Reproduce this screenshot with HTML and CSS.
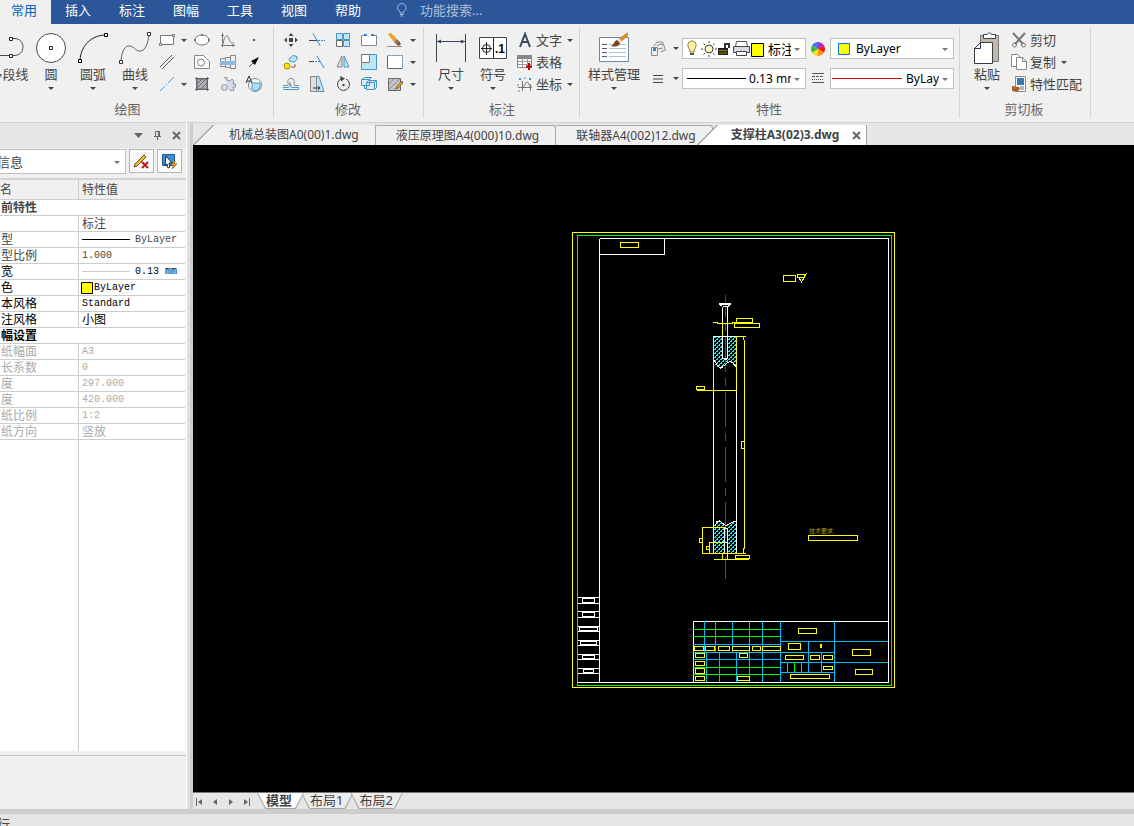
FILE: index.html
```html
<!DOCTYPE html>
<html lang="zh-CN">

<head>
  <meta charset="UTF-8">
  <meta name="viewport" content="width=device-width, initial-scale=1.0">
  <title>CAD</title>
  <link rel="stylesheet" href="styles.css">
</head>

<body>
  <header class="menubar">
    <nav class="menu">
      <a href="#" class="active">常用</a>
      <a href="#">插入</a>
      <a href="#">标注</a>
      <a href="#">图幅</a>
      <a href="#">工具</a>
      <a href="#">视图</a>
      <a href="#">帮助</a>
    </nav>
    <label class="search">
      <svg width="12" height="14" viewBox="0 0 12 14" fill="none" stroke="#a9bcdb"><path d="M4 10V8.500C2.500 7.500 1.500 6.500 1.500 4.800a4.300 4.300 0 0 1 8.600 0C10.100 6.500 9 7.500 7.500 8.500V10zM4 11.500h3.500M4.500 13h2.500"/></svg>
      <input type="text" placeholder="功能搜索..." aria-label="功能搜索...">
    </label>
  </header>

  <div class="ribbon">
    <!-- draw -->
    <section class="group draw">
      <div class="group-body">
        <button class="big">
          <svg width="34" height="34" viewBox="0 0 34 34" fill="none" stroke="#444b57"><path d="M0 24.500h19M19 7.500h3c12 0 12 17 0 17h-3"/><g fill="#fff" stroke="#222"><path d="M17.500 6.500h3v3h-3zM17.500 23.500h3v3h-3z"/></g></svg>
          <span>多段线</span>
        </button>
        <button class="big">
          <svg width="34" height="34" viewBox="0 0 34 34"><circle cx="17" cy="17" r="14.500" fill="#fff" stroke="#444b57"/><path d="M15.500 15.500h3v3h-3z" fill="#fff" stroke="#222"/></svg>
          <span>圆</span><i class="arrow"></i>
        </button>
        <button class="big">
          <svg width="34" height="34" viewBox="0 0 34 34" fill="none" stroke="#222"><path d="M4 29C5 14 16 4 30 4"/><path d="M2.500 28.500h3v3h-3zM28.500 2.500h3v3h-3z" fill="#fff" stroke="#000"/></svg>
          <span>圆弧</span><i class="arrow"></i>
        </button>
        <button class="big">
          <svg width="34" height="34" viewBox="0 0 34 34" fill="none" stroke="#555c66"><path d="M3 29C4 20 7 14 12 15c5 1 6 6 11 5 5-1 7-9 8-16"/><path d="M1.500 29.500h3v3h-3zM29.500 1.500h3v3h-3z" fill="#fff" stroke="#333"/></svg>
          <span>曲线</span><i class="arrow"></i>
        </button>
        <div class="icons draw-icons">
          <button aria-label="矩形"><svg width="18" height="16" viewBox="0 0 18 16" fill="#fff" stroke="#777"><path d="M2.500 3.500h13v9h-13z"/><path d="M1.500 11.500h2v2h-2zM14.500 2.500h2v2h-2z"/></svg></button>
          <i class="arrow"></i>
          <button aria-label="椭圆"><svg width="18" height="16" viewBox="0 0 18 16" fill="#fff" stroke="#777"><ellipse cx="9" cy="8" rx="7" ry="5"/><path d="M1 7h2v2H1zM15 7h2v2h-2zM8 2h2v2H8z" fill="#777" stroke="none"/></svg></button>
          <button aria-label="函数"><svg width="16" height="16" viewBox="0 0 16 16" fill="none" stroke="#777"><path d="M2.500 1v14M1 13.500h14M3 12C5 1 8 3 9 7s3 4 5 4M1 3.500h3M13 12v3"/></svg></button>
          <button aria-label="点"><svg width="16" height="16" viewBox="0 0 16 16"><path d="M7 7h2v2H7z" fill="#555"/></svg></button>

          <button aria-label="平行线"><svg width="16" height="16" viewBox="0 0 16 16" fill="none" stroke="#555"><path d="M1 13L13 1M3 15L15 3"/></svg></button>
          <i></i>
          <button aria-label="孔"><svg width="16" height="16" viewBox="0 0 16 16" fill="#fafafa" stroke="#888"><path d="M.5 1.500h9l6 6v7H.5z"/><circle cx="7" cy="8.500" r="3.500"/></svg></button>
          <button aria-label="轴"><svg width="18" height="16" viewBox="0 0 18 16" fill="#e8f0f8" stroke="#888"><path d="M1.500 4.500h5v8h-5zM6.500 3.500h5v10h-5zM11.500 1.500h5v13h-5z"/><path d="M1 7h16v4H1z" fill="#8db8e0" stroke="none"/></svg></button>
          <button aria-label="箭头"><svg width="16" height="16" viewBox="0 0 16 16"><path d="M3 13l6-6" stroke="#555"/><path d="M13 3L5 7l4 4z" fill="#000"/></svg></button>

          <button aria-label="中心线"><svg width="16" height="16" viewBox="0 0 16 16" stroke="#35a9e0"><path d="M1 15l5-5M7 9l1-1M9 7l6-6"/></svg></button>
          <i class="arrow"></i>
          <button aria-label="剖面线"><svg width="16" height="16" viewBox="0 0 16 16" fill="#aeb2b8" stroke="#666"><path d="M3 3h10v10H3z"/><path d="M1 2.500h14M1 13.500h14M2.500 1v14M13.500 1v14M3 8l5-5M3 12l9-9M7 13l6-6"/></svg></button>
          <button aria-label="齿形"><svg width="16" height="16" viewBox="0 0 16 16" fill="#d6dde8" stroke="#8a93a3"><path d="M4 1.500h3V4l3 1 2-2 2 2-1 3h2.500v3H13l1 3-3 1-2-2"/><circle cx="4.500" cy="11.500" r="3"/></svg></button>
          <button aria-label="局部放大"><svg width="18" height="18" viewBox="0 0 18 18"><circle cx="10" cy="10" r="6.500" fill="#f7f7f7" stroke="#888"/><path d="M7 8h8v5l-4 3-4-2z" fill="#aedcf5" stroke="#4a9bc9"/><path d="M1 8l3-7 3 7M2 6h4" fill="none" stroke="#333"/></svg></button>
        </div>
      </div>
      <h2>绘图</h2>
    </section>

    <!-- modify -->
    <section class="group modify">
      <div class="group-body">
        <div class="icons modify-icons">
          <button aria-label="平移"><svg width="16" height="16" viewBox="0 0 16 16" fill="#444"><path d="M6 6h4v4H6zM8 1l2.500 3h-5zM8 15l2.500-3h-5zM1 8l3-2.500v5zM15 8l-3-2.500v5z"/></svg></button>
          <button aria-label="裁剪"><svg width="16" height="16" viewBox="0 0 16 16" fill="none"><path d="M0 8.500h8" stroke="#444"/><path d="M9 8.500h7" stroke="#2f86d6" stroke-dasharray="2 1"/><path d="M4 1.500l7 12" stroke="#2f86d6"/></svg></button>
          <button aria-label="阵列"><svg width="16" height="16" viewBox="0 0 16 16" fill="#bfe4f8" stroke="#4795c4"><path d="M1.500 1.500h6v6h-6zM8.500 1.500h6v6h-6zM8.500 8.500h6v6h-6z"/><path d="M1.500 8.500h6v6h-6z" fill="#fff" stroke="#666"/></svg></button>
          <button aria-label="打断"><svg width="16" height="16" viewBox="0 0 16 16"><path d="M.5 3.500h15v10H.5z" fill="#fff" stroke="#888"/><path d="M4 2h8v3H4z" fill="#f0f0f0"/><path d="M3 2h3v2H3zM10 2h3v2h-3z" fill="#2f86d6"/></svg></button>
          <button aria-label="删除"><svg width="16" height="16" viewBox="0 0 16 16"><path d="M1 2l3-1 6 6-3 3z" fill="#f0a020"/><path d="M7 10l3-3 2 2-3 3z" fill="#777"/><path d="M9 12l3-3 2 3-2 2z" fill="#9c4a20"/><path d="M0 14.500h15" stroke="#888"/></svg></button>
          <i class="arrow"></i>

          <button aria-label="平移复制"><svg width="16" height="16" viewBox="0 0 16 16"><circle cx="4" cy="12" r="3" fill="#ffe600" stroke="#a08a10"/><path d="M6 5l4-3.500 4 1v3L11 8 7 7.500z" fill="#bfe4f8" stroke="#4795c4"/><path d="M8 13h4v-3" fill="none" stroke="#b04040"/></svg></button>
          <button aria-label="延伸"><svg width="16" height="16" viewBox="0 0 16 16" fill="none"><path d="M0 7.500h5" stroke="#444"/><path d="M6 7.500h6" stroke="#2f86d6" stroke-dasharray="2 1"/><path d="M8 2l7 12" stroke="#2f86d6"/></svg></button>
          <button aria-label="镜像"><svg width="16" height="16" viewBox="0 0 16 16"><path d="M7 2v11H2z" fill="#ddd" stroke="#888"/><path d="M9 2v11h5z" fill="#bfe4f8" stroke="#4795c4"/></svg></button>
          <button aria-label="缩放"><svg width="18" height="16" viewBox="0 0 18 16"><path d="M1.500.5h15v15h-15z" fill="#bfe4f8" stroke="#4795c4"/><path d="M1.500.5h8v8h-8z" fill="#fff" stroke="#777"/></svg></button>
          <button aria-label="拉伸"><svg width="16" height="16" viewBox="0 0 16 16"><path d="M.5 1.500h15v13H.5z" fill="#fff" stroke="#666"/><path d="M.5 1.500h15v13" fill="none" stroke="#8cc8ee" stroke-dasharray="2 1"/></svg></button>
          <i class="arrow"></i>

          <button aria-label="等距线"><svg width="16" height="16" viewBox="0 0 16 16" fill="none"><path d="M0 9.500h4c3 0-2-7 4-7s1 7 4 7h4" stroke="#888"/><path d="M0 13.500h15.500v-2H9c-2 0-1-5-2-5s1 5-2 5H0" stroke="#4795c4"/></svg></button>
          <button aria-label="拔模"><svg width="16" height="16" viewBox="0 0 16 16"><path d="M7 .5h3l5 15H7z" fill="#bfe4f8" stroke="#4795c4"/><path d="M1.500.5h6v15h-6z" fill="#ddd" stroke="#888"/><path d="M4 12h7M9 10l2 2-2 2" fill="none" stroke="#333"/></svg></button>
          <button aria-label="旋转"><svg width="16" height="16" viewBox="0 0 16 16"><path d="M6 3a6 6 0 1 0 5 0" fill="none" stroke="#444"/><path d="M5 0l5 2.500-4 3z" fill="#444"/><circle cx="8.500" cy="9" r="1.200" fill="#444"/></svg></button>
          <button aria-label="块"><svg width="16" height="16" viewBox="0 0 16 16" fill="#d6edfa" stroke="#4795c4"><path d="M.5 3.500l3-2h7l-2 2v6h-8zM5.500 6.500h8v7h-8zM5.500 6.500l2-2h8l-2 2M15.500 4.500v7l-2 2M.5 3.500h8M3.500 9.500v3h2"/></svg></button>
          <button aria-label="填充编辑"><svg width="16" height="16" viewBox="0 0 16 16"><path d="M1.500 2.500h12v12h-12z" fill="#c4c6ca" stroke="#666"/><path d="M2 8l6-6M2 13L13 3M7 14l6-6" stroke="#888"/><path d="M15 5l1 2-5 5-2 1 1-3z" fill="#f0a020" stroke="#86602a"/></svg></button>
          <i class="arrow"></i>
        </div>
      </div>
      <h2>修改</h2>
    </section>

    <!-- annotate -->
    <section class="group annotate">
      <div class="group-body">
        <button class="big">
          <svg width="34" height="34" viewBox="0 0 34 34" fill="none" stroke="#3a4656"><path d="M2.500 3v28M31.500 3v28M3 10.500h28"/><path d="M3 10.500l4-2v4zM31 10.500l-4-2v4z" fill="#3a4656" stroke="none"/></svg>
          <span>尺寸</span><i class="arrow"></i>
        </button>
        <button class="big">
          <svg width="34" height="34" viewBox="0 0 34 34" fill="none" stroke="#222"><path d="M3.500 6.500h27v21h-27z" fill="#fff" stroke="#3a4656"/><path d="M17.500 7v20M5 17.500h11M10.500 11v13"/><circle cx="10.500" cy="17.500" r="4"/><text x="19" y="22" class="tol">.1</text></svg>
          <span>符号</span><i class="arrow"></i>
        </button>
        <div class="rows">
          <button><svg width="22" height="16" viewBox="0 0 22 16"><path d="M6 15L11 2l5 13M7.500 10h7" fill="none" stroke="#3a4656" stroke-width="2"/></svg>文字<i class="arrow"></i></button>
          <button><svg width="22" height="16" viewBox="0 0 22 16"><path d="M3.500 1.500h14v12h-14z" fill="#fff" stroke="#888"/><path d="M3 1h15v4H3z" fill="#888"/><path d="M8.500 4v9M13.500 4v9M4 7.500h13M4 10.500h13" stroke="#999"/><path d="M15 9v7M12 12.500h6" stroke="#c00000" stroke-width="2"/></svg>表格</button>
          <button><svg width="22" height="16" viewBox="0 0 22 16" fill="none"><path d="M8.500 5v10M4 11.500h12M9 11c2 0 2-5 4-5s2 6 5 5M16.500 8v7" stroke="#777"/><path d="M5 2l2 2M7 2L5 4M15 2l2 2M17 2l-2 2M4 8v2M5 14v2M10 2h2" stroke="#3c8fd0"/></svg>坐标<i class="arrow"></i></button>
        </div>
      </div>
      <h2>标注</h2>
    </section>

    <!-- properties -->
    <section class="group props-group">
      <div class="group-body">
        <button class="big wide">
          <svg width="34" height="34" viewBox="0 0 34 34" fill="none"><path d="M2.500 6.500h29v24h-29z" fill="#fff" stroke="#6f87a6"/><path d="M5 13.500h5M5 17.500h5M5 21.500h5M5 25.500h5" stroke="#4a6078"/><path d="M12 13.500h17M12 17.500h17M12 21.500h17M12 25.500h17" stroke="#b4bed8"/><path d="M31 1v4l-8 7-3-3z" fill="#d98a2b"/><path d="M23 12l-3-3 2-2 3 3z" fill="#ddd"/><path d="M20 9l3 3c-1 4-5 4-9 3 3-1 3-5 6-6z" fill="#7a4418"/></svg>
          <span>样式管理</span><i class="arrow"></i>
        </button>
        <div class="fields">
          <button class="tool" aria-label="图层"><svg width="16" height="16" viewBox="0 0 16 16" fill="#eee" stroke="#888"><path d="M3.500 5l4-4h5l3 8-5 2"/><path d="M1.500 6.500h6v8h-6z"/><path d="M7 5l3-2 3 1M8 8l5-1" fill="none"/><path d="M3 7h3v3H3z" fill="#3f83bf" stroke="none"/></svg></button>
          <i class="arrow"></i>
          <div class="combo">
            <svg width="80" height="19" viewBox="0 0 80 19" fill="none">
              <path d="M6 11C3 8 3 2 8 2s5 6 2 9v2H6z" fill="#fff0a8" stroke="#8c7a30"/><path d="M6 14h4v2H6z" fill="#555"/>
              <circle cx="25" cy="10" r="4" fill="#fff3c4" stroke="#444"/><path d="M25 2v2M25 16v2M17 10h2M31 10h2M19.500 4.500L21 6M29 14l1.500 1.500M30.500 4.500L29 6M21 14l-1.500 1.500" stroke="#444"/>
              <path d="M34 9h10v7H34z" fill="#222"/><path d="M35 11.500h8M35 14h8" stroke="#8c8c00"/><path d="M41 9V5h4v4" stroke="#333" stroke-width="2"/>
              <path d="M52.500 2.500h10l1 5h-12z" fill="#fff" stroke="#555"/><path d="M49.500 7.500h16v6h-16z" fill="#d8dce2" stroke="#444"/><path d="M52.500 12.500h10v4h-10z" fill="#fff" stroke="#444"/>
              <path d="M67.500 4.500h12v13h-12z" fill="#ff0" stroke="#000"/>
            </svg>
            <select class="layer" aria-label="图层"><option>标注</option></select>
          </div>
          <button class="tool" aria-label="颜色"><svg width="14" height="14" viewBox="0 0 14 14"><path d="M7 7V0a7 7 0 0 1 6 3.500z" fill="#a030d0"/><path d="M7 7l6-3.500a7 7 0 0 1 0 7z" fill="#f01818"/><path d="M7 7l6 3.500A7 7 0 0 1 7 14z" fill="#ff9010"/><path d="M7 7v7a7 7 0 0 1-6-3.500z" fill="#f4dc20"/><path d="M7 7l-6 3.500a7 7 0 0 1 0-7z" fill="#38b838"/><path d="M7 7L1 3.500A7 7 0 0 1 7 0z" fill="#4478e8"/></svg></button>
          <div class="combo color">
            <svg width="12" height="12" viewBox="0 0 12 12"><path d="M.5.5h11v11H.5z" fill="#ff0" stroke="#0078d7"/></svg>
            <select aria-label="颜色"><option>ByLayer</option></select>
          </div>

          <button class="tool" aria-label="线宽"><svg width="12" height="10" viewBox="0 0 12 10"><path d="M1 1.500h10M1 5h10M1 8.500h10" stroke="#444"/></svg></button>
          <i class="arrow"></i>
          <div class="combo line">
            <svg width="60" height="3" viewBox="0 0 60 3"><path d="M0 1.500h59" stroke="#000"/></svg>
            <select aria-label="线宽"><option>0.13 mm</option></select>
          </div>
          <button class="tool" aria-label="线型"><svg width="12" height="11" viewBox="0 0 12 11" stroke="#555"><path d="M0 .5h12M0 9.500h12"/><path d="M0 3.500h12" stroke-dasharray="3 1"/><path d="M0 6.500h12" stroke-dasharray="1 1"/></svg></button>
          <div class="combo type">
            <svg width="70" height="3" viewBox="0 0 70 3"><path d="M0 1.500h70" stroke="#d80000"/></svg>
            <select aria-label="线型"><option>ByLayer</option></select>
          </div>
        </div>
      </div>
      <h2>特性</h2>
    </section>

    <!-- clipboard -->
    <section class="group clipboard">
      <div class="group-body">
        <button class="big">
          <svg width="34" height="34" viewBox="0 0 34 34"><path d="M10.500 4.500h18v26h-18z" fill="#c4b8a8" stroke="#777"/><path d="M13.500 7.500v-4h4c0-2 4-2 4 0h4v4z" fill="#fff" stroke="#444"/><path d="M4.500 17.500l6-6h12v21h-18z" fill="#fff" stroke="#333b48"/><path d="M4.500 17.500h6v-6" fill="none" stroke="#333b48"/></svg>
          <span>粘贴</span><i class="arrow"></i>
        </button>
        <div class="rows">
          <button><svg width="22" height="16" viewBox="0 0 22 16" fill="none" stroke="#777"><path d="M5 1l10 11M17 1L7 12" stroke-width="2"/><circle cx="6.500" cy="13" r="2"/><circle cx="15.500" cy="13" r="2"/></svg>剪切</button>
          <button><svg width="22" height="16" viewBox="0 0 22 16" fill="#fff" stroke="#888"><path d="M3.500.5h6l3 3v9h-9z"/><path d="M8.500 3.500h6l4 4v8h-10z"/><path d="M14.500 3.500v4h4" fill="none"/></svg>复制<i class="arrow"></i></button>
          <button><svg width="22" height="16" viewBox="0 0 22 16"><path d="M7.500.5h10v15h-10z" fill="#fff" stroke="#888"/><path d="M9 2h7v7H9z" fill="#3a78b4"/><path d="M12 11h4M12 13h4" stroke="#666"/><path d="M4 10l7 1 1 2-3 3-5-1z" fill="#b06020"/></svg>特性匹配</button>
        </div>
      </div>
      <h2>剪切板</h2>
    </section>
  </div>

  <main class="workspace">
    <aside class="panel">
      <div class="panel-title">
        <button aria-label="菜单"><svg width="9" height="9" viewBox="0 0 9 9"><path d="M0 2h9L4.500 7z" fill="#666"/></svg></button>
        <button aria-label="固定"><svg width="9" height="9" viewBox="0 0 9 9" fill="none" stroke="#666"><path d="M2.500 5V.5h4V5M5.500 0v5M1 5.500h7M4.500 6v3"/></svg></button>
        <button aria-label="关闭"><svg width="9" height="9" viewBox="0 0 9 9"><path d="M1 1l7 7M8 1L1 8" stroke="#666" stroke-width="2"/></svg></button>
      </div>
      <div class="panel-tools">
        <div class="combo"><select aria-label="信息"><option>信息</option></select></div>
        <button aria-label="清除"><svg width="17" height="17" viewBox="0 0 17 17"><path d="M2 11L11 2l2 2-9 9-3 1z" fill="#f0c040" stroke="#6a4a20"/><path d="M9 9l6 6M15 9l-6 6" stroke="#c01818" stroke-width="2"/></svg></button>
        <button aria-label="选择"><svg width="17" height="17" viewBox="0 0 17 17"><path d="M1.500 1.500h12v11h-12z" fill="#3f8fd6" stroke="#205a94"/><path d="M5 3l6 7H8l1 4-2 1-1-4-2 1z" fill="#fff" stroke="#222"/><path d="M14 8l-4 4h3l-2 4 5-5h-3z" fill="#ffc030" stroke="#b07010"/></svg></button>
      </div>
      <div class="props">
        <table>
          <thead>
            <tr><th>名</th><th>特性值</th></tr>
          </thead>
          <tbody>
            <tr class="section gray"><td colspan="2">前特性</td></tr>
            <tr class="soft"><td></td><td>标注</td></tr>
            <tr class="soft"><td>型</td><td><div class="val wide"><svg width="48" height="3" viewBox="0 0 48 3"><path d="M0 1.500h48" stroke="#000"/></svg><span class="mono">ByLayer</span></div></td></tr>
            <tr class="soft"><td>型比例</td><td><span class="mono">1.000</span></td></tr>
            <tr><td>宽</td><td><div class="val wide"><svg width="48" height="3" viewBox="0 0 48 3"><path d="M0 1.500h48" stroke="#ccc"/></svg><span class="mono">0.13 mm</span></div></td></tr>
            <tr><td>色</td><td><div class="val"><svg class="swatch" width="12" height="12" viewBox="0 0 12 12"><path d="M.5.5h11v11H.5z" fill="#ff0" stroke="#000"/></svg><span class="mono">ByLayer</span></div></td></tr>
            <tr><td>本风格</td><td><span class="mono">Standard</span></td></tr>
            <tr><td>注风格</td><td>小图</td></tr>
            <tr class="section"><td colspan="2">幅设置</td></tr>
            <tr class="off"><td>纸幅面</td><td><span class="mono">A3</span></td></tr>
            <tr class="off"><td>长系数</td><td><span class="mono">0</span></td></tr>
            <tr class="off"><td>度</td><td><span class="mono">297.000</span></td></tr>
            <tr class="off"><td>度</td><td><span class="mono">420.000</span></td></tr>
            <tr class="off"><td>纸比例</td><td><span class="mono">1:2</span></td></tr>
            <tr class="off"><td>纸方向</td><td>竖放</td></tr>
            <tr class="rest"><td></td><td></td></tr>
          </tbody>
        </table>
      </div>
      <div class="hint"></div>
    </aside>
    <div class="splitter"></div>

    <div class="editor">
      <nav class="doc-tabs">
        <a href="#" class="slant"><span>机械总装图A0(00)1.dwg</span></a>
        <a href="#"><span>液压原理图A4(000)10.dwg</span></a>
        <a href="#" class="last"><span>联轴器A4(002)12.dwg</span></a>
        <a href="#" class="slant current"><span>支撑柱A3(02)3.dwg</span><svg width="9" height="9" viewBox="0 0 9 9"><path d="M1 1l7 7M8 1L1 8" stroke="#666" stroke-width="2"/></svg></a>
      </nav>

      <div class="canvas">
        <svg class="drawing" viewBox="193 145 941 647" preserveAspectRatio="xMinYMin meet">
          <defs>
            <pattern id="hatch" width="4" height="4" patternUnits="userSpaceOnUse">
              <path d="M0 3h1v1H0zM1 2h1v1H1zM2 1h1v1H2zM3 0h1v1H3zM1 3h1v1H1zM3 1h1v1H3z" fill="#00ffff"/>
            </pattern>
          </defs>

          <!-- sheet frames -->
          <g class="yellow"><path d="M572.500 232.500h322v455h-322z"/></g>
          <g class="green"><path d="M577.500 235.500h314v450h-314z"/></g>
          <g class="white">
            <path d="M599.500 238.500h289v444h-311M599.500 238.500v444M599.500 254.500h65v-16"/>
            <path d="M577.500 597.500h22M577.500 603.500h22M577.500 611.500h22M577.500 617.500h22M577.500 626.500h22M577.500 631.500h22M577.500 640.500h22M577.500 645.500h22M577.500 654.500h22M577.500 659.500h22M577.500 668.500h22M577.500 673.500h22"/>
            <path d="M582.500 598.500h12v4h-12zM582.500 612.500h12v4h-12zM579.500 627.500h18v3h-18zM580.500 641.500h16v3h-16zM582.500 655.500h12v3h-12zM583.500 669.500h10v3h-10z"/>
          </g>
          <g class="yellow"><path d="M620.500 242.500h18v5h-18z"/></g>

          <!-- title block -->
          <g class="white"><path d="M888.500 621.500h-195v61"/></g>
          <g class="blue">
            <path d="M704.500 621v31M715.500 621v31M732.500 621v31M749.500 621v61M762.500 621v61M780.500 621v61M834.500 621v61M706.500 652v30M719.500 652v30M736.500 652v30M808.500 641v31M821.500 652v20"/>
            <path d="M693 644.500h87M693 652.500h141M693 659.500h87M780 641.500h108M780 662.500h108M780 672.500h54"/>
          </g>
          <g class="green"><path d="M693 629.500h87M693 636.500h87M693 667.500h87M693 674.500h87M787.500 662v10M794.500 662v10M801.500 662v10"/></g>
          <g class="yellow">
            <path d="M694.500 646.500h9v4h-9zM705.500 646.500h9v4h-9zM718.500 646.500h11v4h-11zM732.500 646.500h17v4h-17zM752.500 646.500h8v4h-8zM762.500 646.500h18v4h-18z"/>
            <path d="M695.500 653.500h9v4h-9zM695.500 661.500h9v4h-9zM695.500 668.500h9v5h-9zM695.500 676.500h9v4h-9zM739.500 653.500h8v4h-8zM737.500 676.500h12v4h-12z"/>
            <path d="M798.500 628.500h18v5h-18zM788.500 643.500h12v6h-12zM820.500 644.500h1v3h-1zM785.500 655.500h18v4h-18zM810.500 655.500h9v4h-9zM823.500 655.500h9v4h-9zM823.500 666.500h9v3h-9zM790.500 674.500h39v4h-39z"/>
            <path d="M852.500 649.500h18v6h-18zM855.500 669.500h17v5h-17z"/>
          </g>

          <!-- column section -->
          <path d="M713 337h24v30l-3-3-4-2-4 1-3 3-3 2-4-2-3-6z" fill="url(#hatch)"/>
          <path d="M713 553v-25l3-6 4 0 5 4 5-2 4-3h3v32z" fill="url(#hatch)"/>
          <path d="M723 308h4v50h-4zM724 528h4v25h-4z" fill="#000"/>
          <g class="red"><path d="M725.500 295v22M725.500 323v8M725.500 337v35M725.500 378v8M725.500 392v35M725.500 433v8M725.500 447v35M725.500 488v8M725.500 502v36M725.500 557v22"/></g>
          <g class="white">
            <path d="M719 303.500h12M719 304.500h12M720 305.500h2M728 305.500h2M722.500 306.500h6M722.500 307v51M727.500 307v51M722 358.500h6M724 359.500h3"/>
            <path d="M713.500 336.500h23M713.500 390v163M736.500 390v163"/>
            <path d="M713.500 359.500l4 6 3 2.500 3-1.500 3-3 3-2 3 1 4 5M715.500 526l1-4 3-1 6 4.500 5-2 4-2.500h2"/>
            <path d="M724.500 528v25M727.500 528v25M724 528.500h4M713 553.500h31M724 542.500h4"/>
          </g>
          <g class="yellow">
            <path d="M713.500 336v54M736.500 336v54M736 336.500h10M743.500 336v4M744.500 340v209M743.500 548v5M697 390.500h40M696.500 386.500h8v3h-8z"/>
            <path d="M713 322.500h5M717 323.500h16M732 322.500h20M722.500 322v14M727.500 322v14M736.500 318.500h16v4h-16zM734.500 323.500h25v4h-25z"/>
            <path d="M783.500 275.500h12v6h-12zM797.500 274.500h7v3h-7zM799 278l2.500 4 3-5 2-4M741.500 441.500h3v7h-3z"/>
            <path d="M726 527.500h-23.500v26h43M699.500 538.500h3v4h-3zM724 542.500h-14.500v11M706.500 546.500h3v3h-3zM722.500 553v6M727.500 553v6M714 559.500h35M735.500 555.500h14v3h-14z"/>
            <path d="M808.500 535.500h49v5h-49z"/>
          </g>
          <text x="809" y="533" class="note">技术要求.</text>
        </svg>
      </div>

      <nav class="sheet-tabs">
        <div class="pager">
          <button aria-label="第一页"><svg width="8" height="8" viewBox="0 0 8 8" fill="#666"><path d="M1 0h1v8H1zM7 1v6L3 4z"/></svg></button>
          <button aria-label="上一页"><svg width="8" height="8" viewBox="0 0 8 8" fill="#666"><path d="M6 1v6L2 4z"/></svg></button>
          <button aria-label="下一页"><svg width="8" height="8" viewBox="0 0 8 8" fill="#666"><path d="M2 1v6l4-3z"/></svg></button>
          <button aria-label="最后一页"><svg width="8" height="8" viewBox="0 0 8 8" fill="#666"><path d="M6 0h1v8H6zM1 1v6l4-3z"/></svg></button>
        </div>
        <a href="#" class="current"><span>模型</span></a>
        <a href="#"><span>布局1</span></a>
        <a href="#"><span>布局2</span></a>
      </nav>
    </div>
  </main>

  <footer class="command">行</footer>
</body>

</html>
```

FILE: styles.css
```css
* {
  box-sizing: border-box;
}

body {
  margin: 0;
  height: 100vh;
  display: flex;
  flex-direction: column;
  overflow: hidden;
  background: #e6e6e6;
  color: #444;
  font-family: "Noto Sans", "Noto Sans CJK SC", sans-serif;
  font-size: 13px;
}

a {
  color: inherit;
  text-decoration: none;
}

button {
  padding: 0;
  border: none;
  background: none;
  color: inherit;
  font: inherit;
  cursor: pointer;
}

svg {
  display: block;
  flex: none;
}

/* menu bar */
.menubar {
  flex: none;
  display: flex;
  align-items: stretch;
  height: 24px;
  background: #2b579a;
  color: #fff;
}

.menu {
  display: flex;
  margin-left: -3px;
}

.menu a {
  width: 54px;
  text-align: center;
  line-height: 20px;
}

.menu a.active {
  background: #f0f0f0;
  color: #0563c1;
}

.search {
  display: flex;
  align-items: center;
  gap: 12px;
  padding: 0 0 4px 21px;
}

.search input {
  width: 120px;
  height: 20px;
  padding: 0;
  border: none;
  background: none;
  color: #fff;
  font: inherit;
}

.search input::placeholder {
  color: #b0bfd8;
}

/* ribbon */
.ribbon {
  flex: none;
  display: flex;
  height: 99px;
  padding: 3px 0 4px;
  background: #f0f0f0;
  border-bottom: 1px solid #d4d4d4;
  overflow: hidden;
}

.group {
  flex: none;
  padding: 2px 5px 0;
  border-right: 1px solid #d4d4d4;
}

.group h2 {
  margin: 5px 0 0;
  color: #666;
  font-size: 13px;
  font-weight: normal;
  line-height: 18px;
  text-align: center;
}

.group-body {
  display: flex;
  height: 66px;
}

/* the ribbon is scrolled a little to the right */
.draw {
  margin-left: -63px;
  padding-left: 51px;
  padding-right: 6px;
}

.modify {
  padding-left: 4px;
}

.annotate,
.clipboard {
  padding-left: 6px;
}

.clipboard {
  padding-right: 8px;
}

.props-group {
  padding-left: 4px;
}

.big {
  display: flex;
  flex-direction: column;
  align-items: center;
  width: 42px;
  padding-top: 2px;
  line-height: 18px;
  white-space: nowrap;
}

.big.wide {
  width: 60px;
  margin-right: 2px;
}

.big .arrow {
  margin-top: 4px;
}

.big:first-child svg {
  overflow: visible;
}

.arrow {
  width: 0;
  height: 0;
  border: 3px solid transparent;
  border-top-color: #444;
  border-bottom: none;
}

.icons {
  display: grid;
  grid-template-rows: repeat(3, 22px);
  place-items: center;
}

.icons button {
  display: flex;
}

.draw-icons {
  grid-template-columns: 24px 10px 26px 26px 26px;
  margin-left: -1px;
}

.modify-icons {
  grid-template-columns: repeat(5, 26px) 10px;
}

.rows {
  display: grid;
  grid-template-rows: repeat(3, 22px);
}

.rows button {
  display: flex;
  align-items: center;
  line-height: 22px;
}

.rows .arrow {
  margin: 0 1px 0 5px;
}

.tol {
  fill: #000;
  stroke: none;
  font: bold 12px "Liberation Sans", sans-serif;
}

.fields {
  display: grid;
  grid-template-columns: 24px 12px 124px 24px 124px;
  grid-template-rows: 21px 21px;
  gap: 9px 0;
  align-items: center;
  justify-items: center;
  padding-top: 9px;
}

.combo {
  position: relative;
  display: flex;
  align-items: center;
  width: 100%;
  height: 21px;
  padding: 0 14px 0 1px;
  background: #fff;
  border: 1px solid #c0c0c0;
}

.combo::after {
  content: "";
  position: absolute;
  right: 5px;
  top: 50%;
  margin-top: -1px;
  border: 3px solid transparent;
  border-top-color: #777;
  border-bottom: none;
}

.combo select {
  appearance: none;
  flex: 1;
  min-width: 0;
  padding: 0 0 0 4px;
  border: none;
  background: none;
  color: #000;
  font: 12px "Noto Sans", "Noto Sans CJK SC", sans-serif;
}

.combo select.layer {
  font-size: 13px;
}

.combo.color {
  padding-left: 7px;
}

.combo.color select {
  padding-left: 6px;
}

.combo.line {
  padding-left: 4px;
}

.combo.line select {
  padding-left: 2px;
}

/* workspace */
.workspace {
  flex: 1;
  min-height: 0;
  display: flex;
}

.panel {
  flex: none;
  width: 187px;
  display: flex;
  flex-direction: column;
  padding-bottom: 2px;
  background: #f0f0f0;
  border-right: 1px solid #fff;
}

.panel-title {
  display: flex;
  align-items: center;
  justify-content: flex-end;
  gap: 10px;
  height: 25px;
  padding-right: 5px;
  background: #e6e6e6;
}

.panel-tools {
  display: flex;
  gap: 3px;
  padding: 1px 0 4px;
}

.panel-tools .combo {
  width: 126px;
  height: 25px;
  border-left: none;
  padding-left: 0;
}

.panel-tools .combo select {
  padding: 0;
  margin-left: -3px;
  color: #444;
  font-size: 13px;
}

.panel-tools button {
  display: flex;
  align-items: center;
  justify-content: center;
  width: 25px;
  height: 24px;
  background: #fafafa;
  border: 1px solid #b4b4b4;
}

.props {
  flex: 1;
  min-height: 0;
  border-top: 2px solid #d4d4d4;
}

.props table {
  width: 185px;
  height: 100%;
  table-layout: fixed;
  border-spacing: 0;
  background: #fff;
  color: #000;
  font-size: 12px;
  line-height: 15px;
}

.props th {
  height: 20px;
  padding: 0 3px;
  background: #f0f0f0;
  border-bottom: 1px solid #ccc;
  color: #444;
  font-weight: normal;
  text-align: left;
}

.props th:first-child {
  width: 79px;
  padding-left: 0;
  border-right: 1px solid #ccc;
}

.props td {
  height: 16px;
  padding: 0 3px;
  border-bottom: 1px solid #ccc;
  white-space: nowrap;
}

.props td:first-child {
  padding-left: 1px;
  border-right: 1px solid #ccc;
}

.props .section td {
  border-right: none;
  font-weight: bold;
}

.props .gray td,
.props .soft td {
  color: #444;
}

.props .off td {
  color: #aaa;
}

.props .rest td {
  height: auto;
  border-bottom: none;
}

.mono {
  font: 10px/15px "Liberation Mono", monospace;
  vertical-align: top;
}

.val {
  display: flex;
  align-items: center;
  height: 15px;
  gap: 1px;
}

.val.wide {
  gap: 5px;
}

.swatch {
  margin-left: -1px;
}

.hint {
  flex: none;
  height: 52px;
  margin-top: 4px;
  border-top: 1px solid #c4c4c4;
}

.splitter {
  flex: none;
  width: 6px;
  background: #e0e0e0;
  border-right: 3px solid #cdcdcd;
}

.editor {
  flex: 1;
  min-width: 0;
  display: flex;
  flex-direction: column;
}

/* document tabs */
.doc-tabs {
  flex: none;
  display: flex;
  height: 22px;
  padding-top: 2px;
  font-size: 12px;
  line-height: 20px;
}

.doc-tabs a {
  display: flex;
  align-items: center;
  gap: 13px;
  padding: 0 16px 0 20px;
  background: #f0f0f0;
  border: 1px solid #aaa;
  border-width: 1px 1px 0 0;
  border-radius: 2px 3px 0 0;
  white-space: nowrap;
}

.doc-tabs a.slant {
  padding-left: 36px;
  border: none;
  border-radius: 0;
  background: linear-gradient(135deg, transparent 14px, #aaa 14px, #aaa 15px, #f0f0f0 15px);
  border-right: 1px solid #aaa;
}

.doc-tabs a.current {
  margin-left: -16px;
  padding-left: 34px;
  padding-right: 5px;
  background: linear-gradient(135deg, transparent 14px, #aaa 14px, #aaa 15px, #fff 15px);
  font-weight: bold;
}

.canvas {
  flex: 1;
  min-height: 0;
  background: #000;
}

.drawing {
  width: 100%;
  height: 100%;
  fill: none;
  shape-rendering: crispEdges;
}

.yellow {
  stroke: #ffff00;
}

.green {
  stroke: #00ff00;
}

.white {
  stroke: #fff;
}

.blue {
  stroke: #00bfff;
}

.red {
  stroke: #e01010;
}

.note {
  fill: #9a9a10;
  font: 6px "Noto Sans CJK SC", sans-serif;
}

/* sheet tabs */
.sheet-tabs {
  flex: none;
  display: flex;
  height: 17px;
  border-top: 1px solid #777;
  line-height: 15px;
}

.pager {
  display: flex;
  align-items: center;
  gap: 8px;
  padding: 1px 7px 0 2px;
}

.sheet-tabs a {
  position: relative;
  height: 16px;
  padding: 0 8px;
}

.sheet-tabs a::before,
.sheet-tabs a::after {
  content: "";
  position: absolute;
  inset: 0 -2px 0 -1px;
  background: #aaa;
  clip-path: polygon(0 0, 100% 0, calc(100% - 8px) 100%, 8px 100%);
}

.sheet-tabs a::after {
  inset: 0 -1px 1px 0;
  background: #ececec;
}

.sheet-tabs a span {
  position: relative;
  z-index: 2;
}

.sheet-tabs a.current {
  z-index: 1;
  padding: 0 10px 0 8px;
  font-weight: bold;
}

.sheet-tabs a.current::after {
  background: #fff;
}

.command {
  flex: none;
  height: 17px;
  margin-left: -3px;
  border-top: 5px solid #cdcdcd;
  line-height: 20px;
  overflow: hidden;
}
```
